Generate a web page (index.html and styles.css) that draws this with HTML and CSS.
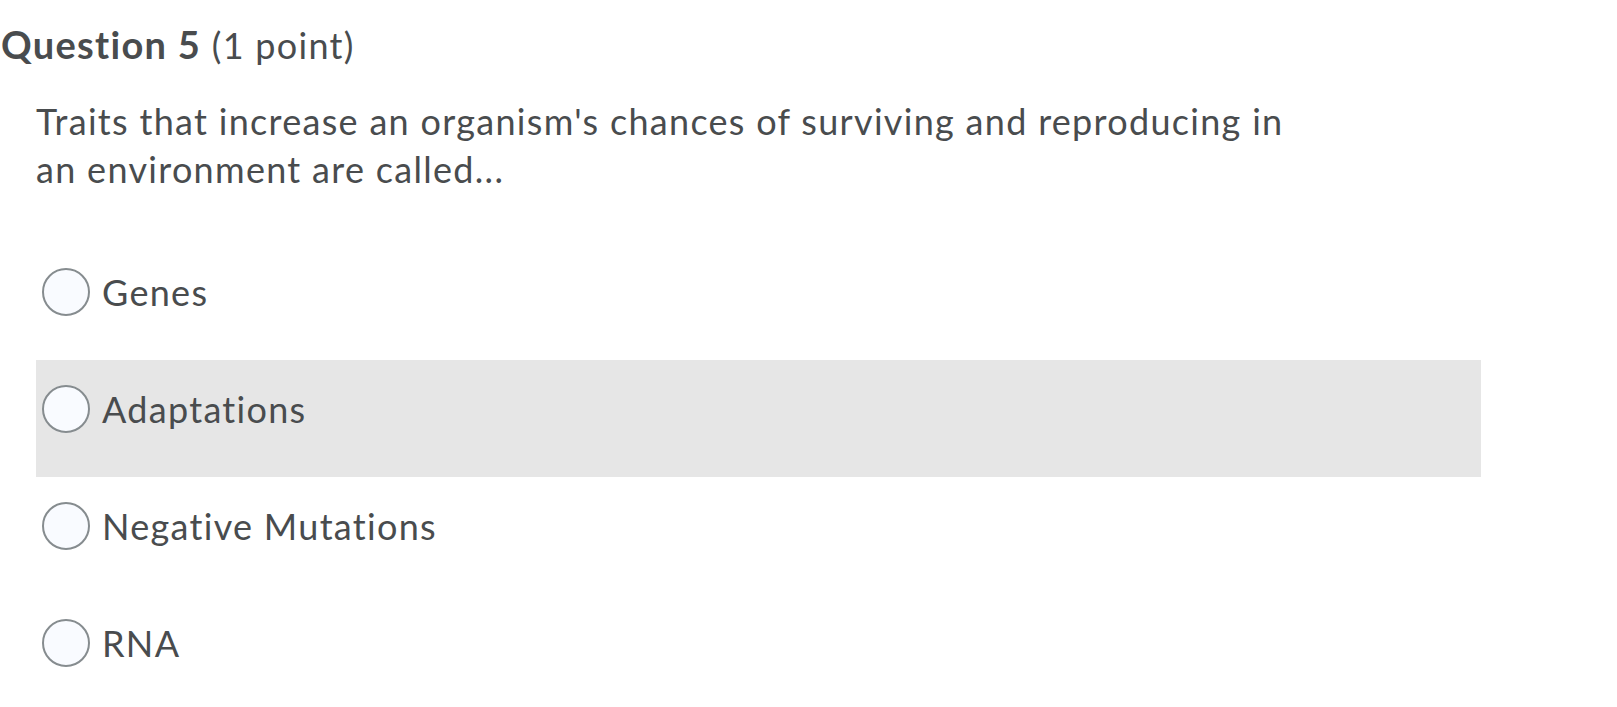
FILE: index.html
```html
<!DOCTYPE html>
<html>
<head>
<meta charset="utf-8">
<link rel="stylesheet" href="styles.css">
</head>
<body>
<div class="question">
  <h2 class="q-title"><strong>Question 5</strong> <span class="q-points">(1 point)</span></h2>
  <div class="q-body">
    <p class="q-text">Traits that increase an organism's chances of surviving and reproducing in<br>an environment are called...</p>
    <div class="options">
      <label class="option"><span class="radio"></span><span class="opt-text">Genes</span></label>
      <label class="option option-hover"><span class="radio"></span><span class="opt-text">Adaptations</span></label>
      <label class="option"><span class="radio"></span><span class="opt-text">Negative Mutations</span></label>
      <label class="option"><span class="radio"></span><span class="opt-text">RNA</span></label>
    </div>
  </div>
</div>
</body>
</html>
```
FILE: styles.css
```css
html, body {
  margin: 0;
  padding: 0;
  background: #ffffff;
}
body {
  font-family: Lato, "Open Sans", sans-serif;
  color: #494c4e;
  font-variant-ligatures: none;
  letter-spacing: 1.3px;
}
.question {
  padding-top: 20px;
}
.q-title {
  margin: 0;
  padding-left: 1px;
  font-size: 36px;
  line-height: 48px;
  font-weight: 400;
  color: #494c4e;
}
.q-title strong {
  font-size: 38px;
  font-weight: 700;
}
.q-body {
  padding-left: 36px;
  width: 1445px;
}
.q-text {
  margin: 28px 0 50px 0;
  font-size: 36px;
  line-height: 48px;
}
.options {
  display: flex;
  flex-direction: column;
}
.option {
  display: flex;
  align-items: center;
  gap: 12px;
  padding: 25px 0 44px 6px;
  font-size: 36px;
  line-height: 48px;
}
.option-hover {
  background: #e6e6e6;
}
.radio {
  box-sizing: border-box;
  width: 48px;
  height: 48px;
  border-radius: 50%;
  border: 2px solid #868c8f;
  background: #f9fbff;
  flex: none;
}
```
